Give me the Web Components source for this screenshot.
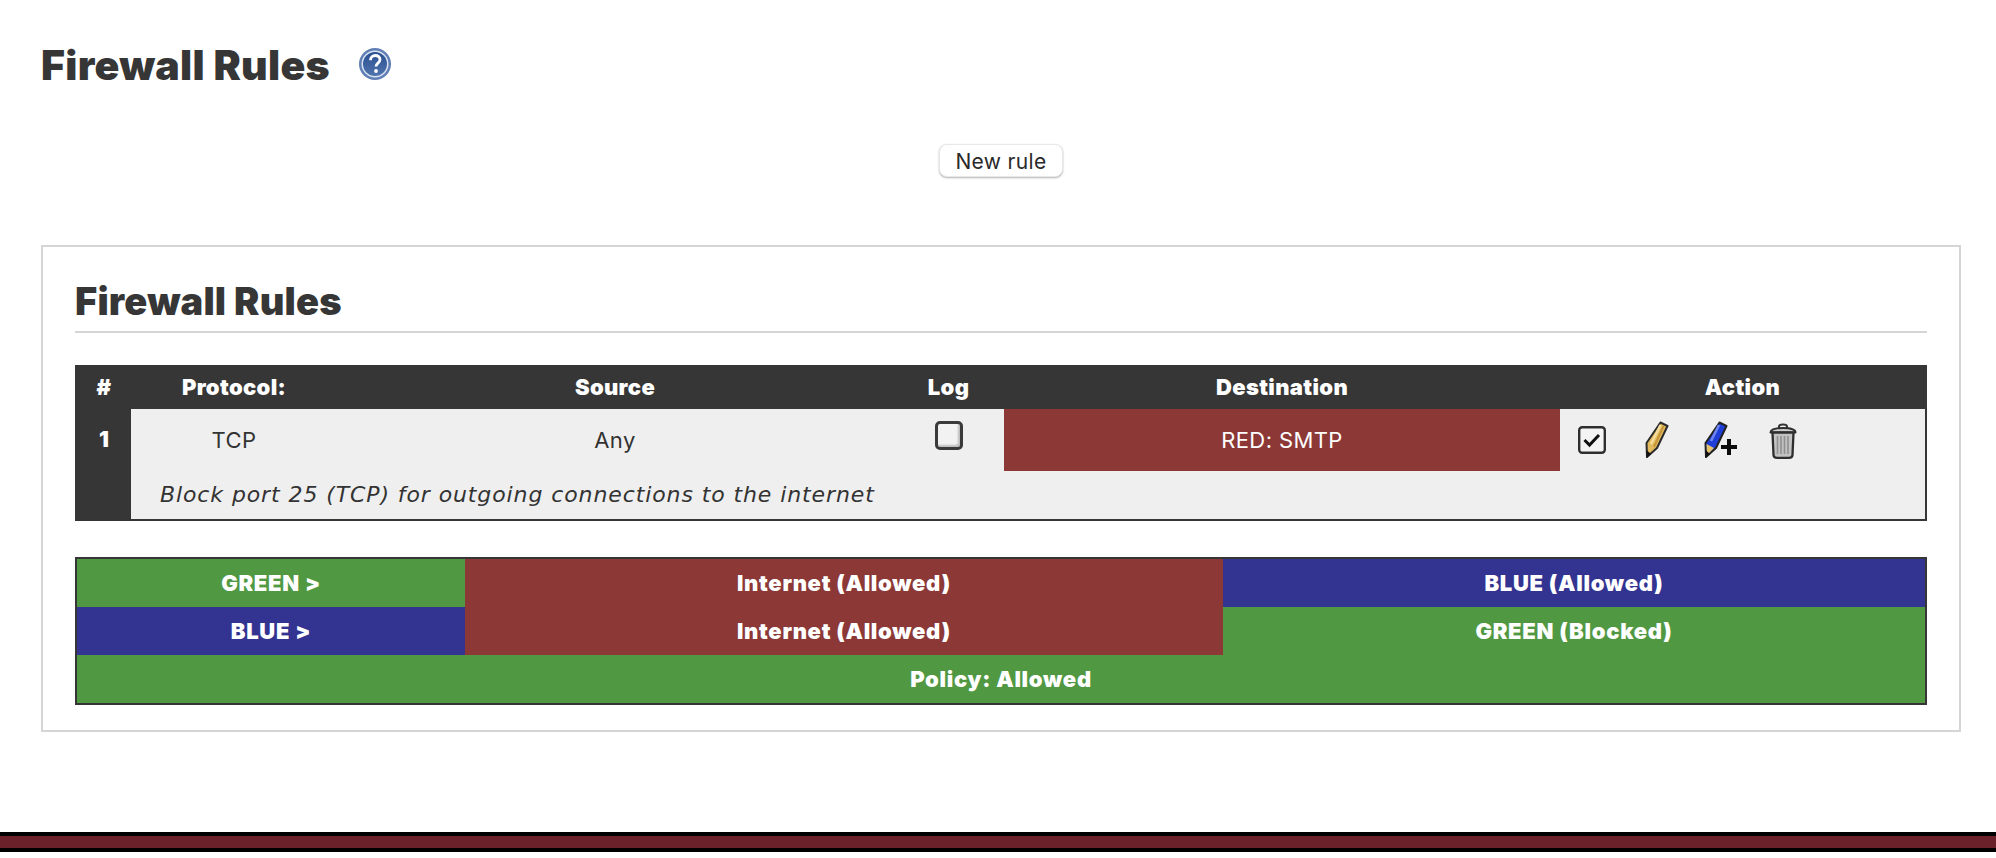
<!DOCTYPE html>
<html>
<head>
<meta charset="utf-8">
<title>Firewall Rules</title>
<style>
    html, body { margin: 0; padding: 0; background: #fff; color: #333; font-family: "Inter", sans-serif; }
</style>
</head>
<body>
<fw-page>
    <fw-title>Firewall Rules</fw-title>
    <fw-action>New rule</fw-action>
    <fw-box heading="Firewall Rules">
        <fw-rules></fw-rules>
        <fw-policy></fw-policy>
    </fw-box>
</fw-page>
<fw-footer></fw-footer>

<script>
(function () {
    const HEAD_FONT = '"Inter", "Lato", sans-serif';

    class FwPage extends HTMLElement {
        constructor() {
            super();
            this.attachShadow({ mode: "open" }).innerHTML = `
                <style>
                    :host { display: block; padding: 42px 35px 0 41px; }
                </style>
                <slot></slot>`;
        }
    }

    class FwTitle extends HTMLElement {
        constructor() {
            super();
            this.attachShadow({ mode: "open" }).innerHTML = `
                <style>
                    :host { display: flex; align-items: center; gap: 28px; height: 44px; }
                    h1 { margin: 0; padding-top: 2px; font: 900 41px/44px ${HEAD_FONT}; color: #363636; letter-spacing: .3px; }
                    svg { display: block; filter: blur(.5px); }
                </style>
                <h1><slot></slot></h1>
                <svg width="34" height="34" viewBox="0 0 34 34">
                    <defs>
                        <linearGradient id="g" x1="0" y1="0" x2="0" y2="1">
                            <stop offset="0" stop-color="#2a4f90"/>
                            <stop offset="1" stop-color="#4f74ae"/>
                        </linearGradient>
                    </defs>
                    <circle cx="17" cy="17" r="16" fill="#5f7fb5"/>
                    <circle cx="17" cy="17" r="13.5" fill="#d9e3f2"/>
                    <circle cx="17" cy="17" r="12" fill="url(#g)"/>
                    <path d="M12.5 13.2c0-3 2.2-4.7 4.8-4.7 2.700 0 4.700 1.700 4.700 4.100 0 3.500-4 3.500-4 6.900" fill="none" stroke="#fff" stroke-width="2.800"/>
                    <circle cx="18" cy="24" r="1.900" fill="#fff"/>
                </svg>`;
        }
    }

    class FwAction extends HTMLElement {
        constructor() {
            super();
            this.attachShadow({ mode: "open" }).innerHTML = `
                <style>
                    :host { display: flex; justify-content: center; margin-top: 58px; }
                    button {
                        width: 124px; height: 33px; padding: 1px 0 0; background: #fff; color: #2a2a2a;
                        border: 1px solid #e8e8e8; border-radius: 8px; box-shadow: 0 1px 2px rgba(0,0,0,.3);
                        font: 400 21px/1 "Inter", sans-serif; letter-spacing: .35px;
                    }
                </style>
                <button type="button"><slot></slot></button>`;
        }
    }

    class FwBox extends HTMLElement {
        constructor() {
            super();
            this.attachShadow({ mode: "open" }).innerHTML = `
                <style>
                    :host { display: block; margin-top: 68px; border: 2px solid #d5d5d5; padding: 32px 32px 25px; }
                    h2 {
                        margin: 0 0 32px; height: 52px; border-bottom: 2px solid #d5d5d5;
                        font: 900 38px/44px ${HEAD_FONT}; color: #363636; letter-spacing: .2px;
                    }
                </style>
                <h2>${this.getAttribute("heading")}</h2>
                <slot></slot>`;
        }
    }

    class FwIcon extends HTMLElement {
        constructor() {
            super();
            const icons = {
                on: `<svg width="28" height="28" viewBox="0 0 28 28">
                        <rect x="1.200" y="1.200" width="25.600" height="25.600" rx="3" fill="#f4f4f4" stroke="#2e2e2e" stroke-width="2.400"/>
                        <path d="M6.500 14l5 5L21 9" fill="none" stroke="#111" stroke-width="3"/>
                     </svg>`,
                edit: `<svg width="24" height="38" viewBox="0 0 24 38">
                        <path d="M15.500 1.500L22.500 5L12 27L2 36L1.500 22Z" fill="#e3bb5e" stroke="#2b2b2b" stroke-width="2" stroke-linejoin="round"/>
                        <path d="M15.500 4L6 23" stroke="#f4dd9d" stroke-width="2.500"/>
                        <path d="M18.500 5L9 26" stroke="#c4953a" stroke-width="2"/>
                        <path d="M1.500 29L6 33L1.500 37Z" fill="#111"/>
                     </svg>`,
                add: `<svg width="36" height="38" viewBox="0 0 36 38">
                        <path d="M15.500 1.500L22.500 5L12 27L2 36L1.500 22Z" fill="#1f3ed8" stroke="#222" stroke-width="2" stroke-linejoin="round"/>
                        <path d="M15 4L7 20" stroke="#6f86f0" stroke-width="2.500"/>
                        <path d="M2.500 23L10 27L3 34Z" fill="#e5c36d"/>
                        <path d="M1.500 29L6 33L1.500 37Z" fill="#111"/>
                        <path d="M25 18v16M17 26h16" stroke="#0c0c0c" stroke-width="4"/>
                     </svg>`,
                trash: `<svg width="28" height="36" viewBox="0 0 28 36">
                        <path d="M10 5V3.500C10 2 11 1.500 14 1.500S18 2 18 3.500V5" fill="none" stroke="#333" stroke-width="2"/>
                        <path d="M1.500 9.500C1.500 6 6 5 14 5S26.500 6 26.500 9.500Z" fill="#cfcfcf" stroke="#2e2e2e" stroke-width="2" stroke-linejoin="round"/>
                        <path d="M3.500 9.500H24.500L23.500 32C23.400 34 22 34.800 20 34.800H8C6 34.800 4.600 34 4.500 32Z" fill="#c2c2c2" stroke="#2e2e2e" stroke-width="2.300" stroke-linejoin="round"/>
                        <path d="M8.500 13V31M12 13V31M15.500 13V31M19 13V31" stroke="#909090" stroke-width="1.600"/>
                     </svg>`
            };
            this.attachShadow({ mode: "open" }).innerHTML = `
                <style>
                    :host { display: block; line-height: 0; }
                    svg { display: block; filter: blur(.35px); }
                </style>
                ${icons[this.getAttribute("name")]}`;
        }
    }

    class FwRules extends HTMLElement {
        constructor() {
            super();
            this.attachShadow({ mode: "open" }).innerHTML = `
                <style>
                    :host { display: block; border: 2px solid #363636; background: #363636; }
                    .grid {
                        display: grid;
                        grid-template-columns: 54px 206px 556px 111px 556px 365px;
                        grid-template-rows: 42px 62px 48px;
                        font: 400 22px/1 "Inter", sans-serif;
                    }
                    .grid > div { display: flex; align-items: center; justify-content: center; }
                    .td, .dest { letter-spacing: .4px; }
                    .th { color: #fff; font: 900 22px/1 ${HEAD_FONT}; letter-spacing: .35px; padding-bottom: 3px; }
                    .num { grid-row: span 2; align-items: flex-start !important; padding-top: 16px; color: #fff; font: 900 22px/1.3 ${HEAD_FONT}; }
                    .td { background: #efefef; color: #333; }
                    .dest { background: #8b3836; color: #fff; }
                    .log input {
                        appearance: none; -webkit-appearance: none; margin: 0 0 10px; width: 28px; height: 29px;
                        border: 3px solid #3a3a3a; border-radius: 5px; background: #f2f2f2; box-sizing: border-box;
                        box-shadow: inset -2px -2px 2px #bdbdbd; filter: blur(.3px);
                    }
                    .actions { justify-content: flex-start !important; align-items: flex-start !important; padding: 12px 0 0 18px; gap: 0; }
                    .actions fw-icon:nth-child(1) { margin: 5px 39px 0 0; }
                    .actions fw-icon:nth-child(2) { margin-right: 35px; }
                    .actions fw-icon:nth-child(3) { margin-right: 29px; }
                    .actions fw-icon:nth-child(4) { margin-top: 2px; }
                    .desc {
                        grid-column: 2 / 7; background: #efefef; color: #333; justify-content: flex-start !important;
                        padding-left: 29px; padding-bottom: 1px;
                        font: oblique 400 22px/1 "DejaVu Sans", sans-serif; letter-spacing: .9px;
                    }
                </style>
                <div class="grid">
                    <div class="th">#</div>
                    <div class="th">Protocol:</div>
                    <div class="th">Source</div>
                    <div class="th">Log</div>
                    <div class="th">Destination</div>
                    <div class="th">Action</div>
                    <div class="num">1</div>
                    <div class="td">TCP</div>
                    <div class="td">Any</div>
                    <div class="td log"><input type="checkbox"></div>
                    <div class="dest">RED: SMTP</div>
                    <div class="td actions">
                        <fw-icon name="on"></fw-icon>
                        <fw-icon name="edit"></fw-icon>
                        <fw-icon name="add"></fw-icon>
                        <fw-icon name="trash"></fw-icon>
                    </div>
                    <div class="desc">Block port 25 (TCP) for outgoing connections to the internet</div>
                </div>`;
        }
    }

    class FwPolicy extends HTMLElement {
        constructor() {
            super();
            this.attachShadow({ mode: "open" }).innerHTML = `
                <style>
                    :host { display: block; margin-top: 36px; border: 2px solid #363636; }
                    .grid {
                        display: grid;
                        grid-template-columns: 388px 758px 702px;
                        grid-auto-rows: 48px;
                        color: #fff; font: 900 22px/1 ${HEAD_FONT}; letter-spacing: .7px;
                    }
                    .grid > div { display: flex; align-items: center; justify-content: center; box-sizing: border-box; }
                    .g { background: #519843; }
                    .b { background: #333391; }
                    .r { background: #8b3836; }
                    .all { grid-column: 1 / 4; }
                </style>
                <div class="grid">
                    <div class="g">GREEN &gt;</div>
                    <div class="r">Internet (Allowed)</div>
                    <div class="b">BLUE (Allowed)</div>
                    <div class="b">BLUE &gt;</div>
                    <div class="r">Internet (Allowed)</div>
                    <div class="g">GREEN (Blocked)</div>
                    <div class="g all">Policy: Allowed</div>
                </div>`;
        }
    }

    class FwFooter extends HTMLElement {
        constructor() {
            super();
            this.attachShadow({ mode: "open" }).innerHTML = `
                <style>
                    :host { display: block; margin-top: 100px; height: 12px; background: #6b2129; border-top: 4px solid #000; border-bottom: 4px solid #000; }
                </style>`;
        }
    }

    customElements.define("fw-page", FwPage);
    customElements.define("fw-title", FwTitle);
    customElements.define("fw-action", FwAction);
    customElements.define("fw-box", FwBox);
    customElements.define("fw-icon", FwIcon);
    customElements.define("fw-rules", FwRules);
    customElements.define("fw-policy", FwPolicy);
    customElements.define("fw-footer", FwFooter);
})();
</script>
</body>
</html>
